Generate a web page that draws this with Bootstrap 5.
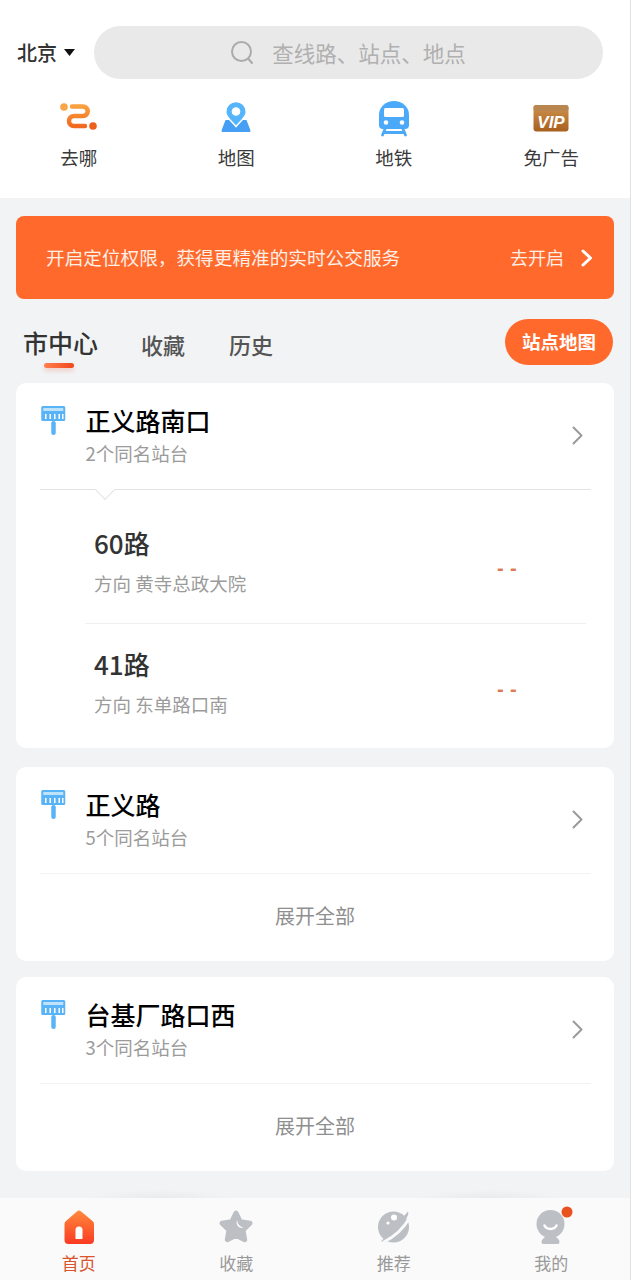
<!DOCTYPE html>
<html lang="zh-CN">
<head>
    <meta charset="UTF-8">
    <meta name="viewport" content="width=device-width, initial-scale=1">
    <title>公交首页</title>
    <link href="https://cdn.jsdelivr.net/npm/bootstrap@5.3.3/dist/css/bootstrap.min.css" rel="stylesheet">
    <script src="https://cdn.jsdelivr.net/npm/bootstrap@5.3.3/dist/js/bootstrap.bundle.min.js"></script>
    <style>
        :root {
            --page-bg: #f1f3f5;
            --brand: #ff6a2c;
            --muted: #9b9b9b;
        }

        body {
            width: 631px;
            height: 1280px;
            overflow: hidden;
            background-color: var(--page-bg);
            border-right: 1px solid #e2e2e2;
            font-family: "Noto Sans CJK SC", "Liberation Sans", sans-serif;
            color: #333;
        }

        /* top block */
        .top-block { height: 198px; padding-top: 26px; }
        .search-row { height: 53px; padding-left: 17px; padding-right: 27px; }
        .city-name { font-size: 20px; line-height: 26px; width: 40px; white-space: nowrap; font-weight: 500; }
        .city-caret { margin-left: 7px; margin-right: 19px; }
        .search-pill { height: 53px; background: #e9e9e9; gap: 18px; border-radius: 27px; }
        .search-hint { font-size: 21.5px; line-height: 26px; color: #b0b0b0; }
        .quick-row { margin-top: 20px; }
        .quick-item { width: 157.5px; }
        .quick-label { font-size: 18.5px; line-height: 24px; margin-top: 8px; color: #3a3a3a; }

        /* location banner */
        .loc-banner {
            height: 83px;
            margin: 18px 16px 0;
            padding: 0 21px 0 30px;
            background: var(--brand);
            border-radius: 8px;
            color: #fdeee6;
            font-size: 18.65px;
        }
        .loc-text { margin-bottom: 2px; }
        .loc-go { font-size: 18px; margin-right: 17px; }

        /* tabs */
        .tab-row { height: 46px; margin-top: 20px; margin-bottom: 18px; padding: 0 17px 0 23px; }
        .tab-item { font-size: 22px; line-height: 30px; color: #555; margin-top: 3px; font-weight: 500; }
        .tab-item + .tab-item { margin-left: 44px; }
        .tab-item.is-active { position: relative; font-size: 25px; color: #333; margin-top: 1px; margin-right: -1px; }
        .tab-item.is-active::after {
            content: "";
            position: absolute;
            left: 21px;
            bottom: -11px;
            width: 30px;
            height: 5px;
            border-radius: 3px;
            background: linear-gradient(90deg, #ff7f50, #f1481b);
            box-shadow: 0 3px 4px rgba(241, 72, 27, .2);
        }
        .map-btn {
            height: 46px;
            width: 108px;
            border-radius: 23px;
            background: var(--brand);
            color: #fff;
            font-size: 18.5px;
            font-weight: 700;
        }

        /* station cards */
        .stop-card { margin: 0 16px; border-radius: 10px; border: 0; }
        .stop-head { height: 107px; margin: 0 23px 0 24px; padding-top: 21px; border-bottom: 1px solid #f2f2f2; position: relative; }
        .stop-icon { width: 45.500px; margin-top: 1px; }
        .stop-name { font-size: 25px; line-height: 32px; color: #000; font-weight: 500; }
        .stop-sub { font-size: 18.5px; line-height: 24px; margin-top: 5px; color: var(--muted); }
        .stop-chevron { margin-top: 22px; margin-right: 8px; }
        .stop-head.is-open { border-bottom-color: #e3e3e3; }
        .stop-head.is-open::after {
            content: "";
            position: absolute;
            left: 58px;
            bottom: -8px;
            width: 14px;
            height: 14px;
            background: #fff;
            border-right: 1px solid #e3e3e3;
            border-bottom: 1px solid #e3e3e3;
            transform: rotate(45deg);
        }
        .line-row { margin: 0 28px 0 69px; padding-left: 9px; }
        .line-row + .line-row { border-top: 1px solid #f0f0f0; padding-top: 22px; padding-bottom: 32px; }
        .line-row.first-line { padding-top: 35px; padding-bottom: 28px; }
        .line-name { font-size: 26px; line-height: 36px; color: #333; font-weight: 500; }
        .line-dir { font-size: 18.5px; line-height: 24px; margin-top: 10px; color: var(--muted); }
        .line-eta {
            margin-top: 31px;
            margin-right: 69px;
            font-family: "Liberation Sans", sans-serif;
            font-size: 20px;
            line-height: 24px;
            font-weight: 700;
            letter-spacing: .4px;
            color: #dc7a55;
        }
        .stop-foot { height: 87px; padding-bottom: 3px; font-size: 20px; color: #8f8f8f; }
        .card-gap-lg { margin-top: 19px; }
        .card-gap-sm { margin-top: 16px; }

        /* soft arcs just above the tab bar */
        .tab-arcs {
            height: 10px;
            background:
                radial-gradient(ellipse 70px 8px at 160px 100%, #e8eaec, transparent),
                radial-gradient(ellipse 70px 8px at 490px 100%, #e8eaec, transparent);
        }

        /* bottom tab bar */
        .tab-bar { height: 82px; background: #fafafa; padding-top: 12px; }
        .bar-item { width: 157.5px; }
        .bar-item svg { overflow: visible; }
        .bar-label { font-size: 17px; line-height: 24px; margin-top: 7px; color: #999; }
        .bar-item.is-active .bar-label { color: #d8552e; }
    </style>
</head>
<body class="d-flex flex-column">

    <div class="top-block bg-white">
        <div class="search-row d-flex align-items-center">
            <span class="city-name">北京</span>
            <svg class="city-caret" width="11" height="7" viewBox="0 0 11 7"><path d="M0 0h11L5.500 7z" fill="#111"/></svg>
            <div class="search-pill flex-grow-1 d-flex align-items-center justify-content-center">
                <svg width="23" height="24" viewBox="0 0 23 24" fill="none" stroke="#ababab" stroke-width="2"><circle cx="10.500" cy="10.500" r="9.500"/><path d="M17.500 18l3.500 4" stroke-linecap="round"/></svg>
                <span class="search-hint">查线路、站点、地点</span>
            </div>
        </div>

        <div class="quick-row d-flex">
            <div class="quick-item d-flex flex-column align-items-center">
                <svg width="40" height="38" viewBox="0 0 40 38">
                    <defs><linearGradient id="goGrad" x1="0" y1="0" x2="0" y2="1"><stop offset="0" stop-color="#f9a03f"/><stop offset="1" stop-color="#f26a1f"/></linearGradient></defs>
                    <circle cx="5" cy="8" r="3.800" fill="#f9a545"/>
                    <path d="M13 7.500H24a4.700 4.700 0 0 1 0 9.500H15a5 5 0 0 0 0 10H26" fill="none" stroke="url(#goGrad)" stroke-width="4.500" stroke-linecap="round"/>
                    <circle cx="34" cy="27" r="3.800" fill="#ee5f1c"/>
                </svg>
                <span class="quick-label">去哪</span>
            </div>
            <div class="quick-item d-flex flex-column align-items-center">
                <svg width="40" height="38" viewBox="0 0 40 38">
                    <path d="M9.500 21h21l3.800 10q.7 2-1.500 2H7.200q-2.200 0-1.500-2z" fill="#469ff5"/>
                    <path d="M20 2.500a10.300 10.300 0 0 1 10.300 10.500c0 5-6 9.500-10.300 14.500-4.300-5-10.300-9.500-10.300-14.500A10.300 10.300 0 0 1 20 2.500z" fill="#54b5fb" stroke="#fff" stroke-width="1.500"/>
                    <circle cx="20" cy="12.500" r="4.300" fill="#fff"/>
                </svg>
                <span class="quick-label">地图</span>
            </div>
            <div class="quick-item d-flex flex-column align-items-center">
                <svg width="40" height="38" viewBox="0 0 40 38">
                    <path d="M5 16a15 14 0 0 1 30 0v10a4 4 0 0 1-4 4H9a4 4 0 0 1-4-4z" fill="#4aa9f8"/>
                    <rect x="10" y="9" width="20" height="9" rx="1.500" fill="#fff"/>
                    <circle cx="12" cy="23.500" r="2.300" fill="#fff"/>
                    <circle cx="28" cy="23.500" r="2.300" fill="#fff"/>
                    <path d="M11 30l-2.500 6M29 30l2.500 6M10 33.500h20" stroke="#4aa9f8" stroke-width="2.800" stroke-linecap="round" fill="none"/>
                </svg>
                <span class="quick-label">地铁</span>
            </div>
            <div class="quick-item d-flex flex-column align-items-center">
                <svg width="40" height="38" viewBox="0 0 40 38">
                    <defs><linearGradient id="vipGrad" x1="0" y1="0" x2="0" y2="1"><stop offset="0" stop-color="#cf9350"/><stop offset="1" stop-color="#a85f1d"/></linearGradient></defs>
                    <rect x="2.500" y="6" width="35" height="26.500" rx="3" fill="url(#vipGrad)"/>
                    <rect x="2.500" y="6" width="35" height="6" rx="2.500" fill="#b9864f"/>
                    <text x="20" y="29" text-anchor="middle" font-family="Liberation Sans, sans-serif" font-size="17" font-weight="700" font-style="italic" fill="#fff">VIP</text>
                </svg>
                <span class="quick-label">免广告</span>
            </div>
        </div>
    </div>

    <div class="loc-banner d-flex align-items-center justify-content-between">
        <span class="loc-text">开启定位权限，获得更精准的实时公交服务</span>
        <span class="d-flex align-items-center">
            <span class="loc-go">去开启</span>
            <svg width="12" height="18" viewBox="0 0 12 18" fill="none" stroke="#fff" stroke-width="3" stroke-linecap="round" stroke-linejoin="round"><path d="M2 2l7.500 7L2 16"/></svg>
        </span>
    </div>

    <div class="tab-row d-flex align-items-center justify-content-between">
        <div class="d-flex align-items-start">
            <span class="tab-item is-active">市中心</span>
            <span class="tab-item">收藏</span>
            <span class="tab-item">历史</span>
        </div>
        <div class="map-btn d-flex align-items-center justify-content-center">站点地图</div>
    </div>

    <main class="flex-grow-1">
        <div class="card stop-card">
            <div class="stop-head is-open d-flex">
                <svg class="stop-icon flex-shrink-0" width="45" height="32" viewBox="0 0 45 32">
                    <rect x="1" y="1" width="24" height="15" rx="1.500" fill="#58b4f6"/>
                    <rect x="3" y="3" width="20" height="3" fill="#bfe2fb"/>
                    <path d="M5.500 9v5M10 9v5M14.500 9v5M19 9v5M22.500 9v5" stroke="#fff" stroke-width="1.500"/>
                    <rect x="11" y="16" width="4.500" height="14" rx="2.200" fill="#58b4f6"/>
                </svg>
                <div class="flex-grow-1">
                    <div class="stop-name">正义路南口</div>
                    <div class="stop-sub">2个同名站台</div>
                </div>
                <svg class="stop-chevron flex-shrink-0" width="11" height="19" viewBox="0 0 11 19" fill="none" stroke="#9a9a9a" stroke-width="2" stroke-linecap="round" stroke-linejoin="round"><path d="M1.500 1.500l8 8-8 8"/></svg>
            </div>
            <div class="line-row first-line d-flex justify-content-between align-items-start">
                <div>
                    <div class="line-name">60路</div>
                    <div class="line-dir">方向 黄寺总政大院</div>
                </div>
                <span class="line-eta">- -</span>
            </div>
            <div class="line-row d-flex justify-content-between align-items-start">
                <div>
                    <div class="line-name">41路</div>
                    <div class="line-dir">方向 东单路口南</div>
                </div>
                <span class="line-eta">- -</span>
            </div>
        </div>

        <div class="card stop-card card-gap-lg">
            <div class="stop-head d-flex">
                <svg class="stop-icon flex-shrink-0" width="45" height="32" viewBox="0 0 45 32">
                    <rect x="1" y="1" width="24" height="15" rx="1.500" fill="#58b4f6"/>
                    <rect x="3" y="3" width="20" height="3" fill="#bfe2fb"/>
                    <path d="M5.500 9v5M10 9v5M14.500 9v5M19 9v5M22.500 9v5" stroke="#fff" stroke-width="1.500"/>
                    <rect x="11" y="16" width="4.500" height="14" rx="2.200" fill="#58b4f6"/>
                </svg>
                <div class="flex-grow-1">
                    <div class="stop-name">正义路</div>
                    <div class="stop-sub">5个同名站台</div>
                </div>
                <svg class="stop-chevron flex-shrink-0" width="11" height="19" viewBox="0 0 11 19" fill="none" stroke="#9a9a9a" stroke-width="2" stroke-linecap="round" stroke-linejoin="round"><path d="M1.500 1.500l8 8-8 8"/></svg>
            </div>
            <div class="stop-foot d-flex align-items-center justify-content-center">展开全部</div>
        </div>

        <div class="card stop-card card-gap-sm">
            <div class="stop-head d-flex">
                <svg class="stop-icon flex-shrink-0" width="45" height="32" viewBox="0 0 45 32">
                    <rect x="1" y="1" width="24" height="15" rx="1.500" fill="#58b4f6"/>
                    <rect x="3" y="3" width="20" height="3" fill="#bfe2fb"/>
                    <path d="M5.500 9v5M10 9v5M14.500 9v5M19 9v5M22.500 9v5" stroke="#fff" stroke-width="1.500"/>
                    <rect x="11" y="16" width="4.500" height="14" rx="2.200" fill="#58b4f6"/>
                </svg>
                <div class="flex-grow-1">
                    <div class="stop-name">台基厂路口西</div>
                    <div class="stop-sub">3个同名站台</div>
                </div>
                <svg class="stop-chevron flex-shrink-0" width="11" height="19" viewBox="0 0 11 19" fill="none" stroke="#9a9a9a" stroke-width="2" stroke-linecap="round" stroke-linejoin="round"><path d="M1.500 1.500l8 8-8 8"/></svg>
            </div>
            <div class="stop-foot d-flex align-items-center justify-content-center">展开全部</div>
        </div>
    </main>

    <div class="tab-arcs"></div>
    <nav class="tab-bar d-flex">
        <div class="bar-item is-active d-flex flex-column align-items-center">
            <svg width="40" height="34" viewBox="0 0 40 34">
                <defs><linearGradient id="homeGrad" x1="0" y1="0" x2="0" y2="1"><stop offset="0" stop-color="#ff8a3c"/><stop offset="1" stop-color="#fb3a22"/></linearGradient></defs>
                <path d="M18.200 1.300q1.800-1.400 3.600 0l11.700 9.700q1.500 1.200 1.500 3V30a4 4 0 0 1-4 4H9.500a4 4 0 0 1-4-4V14q0-1.800 1.500-3z" fill="url(#homeGrad)"/>
                <path d="M16.500 29V20a3.500 3.500 0 0 1 7 0v9z" fill="#fff"/>
            </svg>
            <span class="bar-label">首页</span>
        </div>
        <div class="bar-item d-flex flex-column align-items-center">
            <svg width="40" height="34" viewBox="0 0 40 34">
                <path d="M20 3l4.300 8.800 9.700 1.400-7 6.800 1.700 9.700L20 25.200l-8.700 4.500L13 20l-7-6.800 9.700-1.400z" fill="#bcbfc4" stroke="#bcbfc4" stroke-width="5" stroke-linejoin="round"/>
                <path d="M21 10c.5 4 2.500 6.500 6.500 7.500-4 1.500-8-2-6.500-7.500z" fill="#fff"/>
            </svg>
            <span class="bar-label">收藏</span>
        </div>
        <div class="bar-item d-flex flex-column align-items-center">
            <svg width="40" height="34" viewBox="0 0 40 34">
                <circle cx="19.500" cy="17" r="15.500" fill="#bcbfc4"/>
                <path d="M34 1.500c1 3-1 6-3 8.500L12 32l-5-.5z" fill="#bcbfc4"/>
                <path d="M9 32.500C20 27 30 18 36 7" fill="none" stroke="#fafafa" stroke-width="2.800"/>
                <circle cx="20" cy="7.500" r="3" fill="#fff"/>
                <circle cx="14" cy="13" r="1.600" fill="#fff"/>
            </svg>
            <span class="bar-label">推荐</span>
        </div>
        <div class="bar-item d-flex flex-column align-items-center">
            <svg width="40" height="34" viewBox="0 0 40 34">
                <circle cx="19.500" cy="14" r="14" fill="#bcbfc4"/>
                <path d="M12 34q-1.500 0-1.500-2 0-3 4.500-5.500h9q4.500 2.500 4.500 5.500 0 2-1.500 2z" fill="#bcbfc4"/>
                <path d="M13.500 15.500c2 4.500 10 4.500 12 0" fill="none" stroke="#fff" stroke-width="2.500" stroke-linecap="round"/>
                <circle cx="36" cy="2" r="5.500" fill="#e9511f"/>
            </svg>
            <span class="bar-label">我的</span>
        </div>
    </nav>

</body>
</html>
